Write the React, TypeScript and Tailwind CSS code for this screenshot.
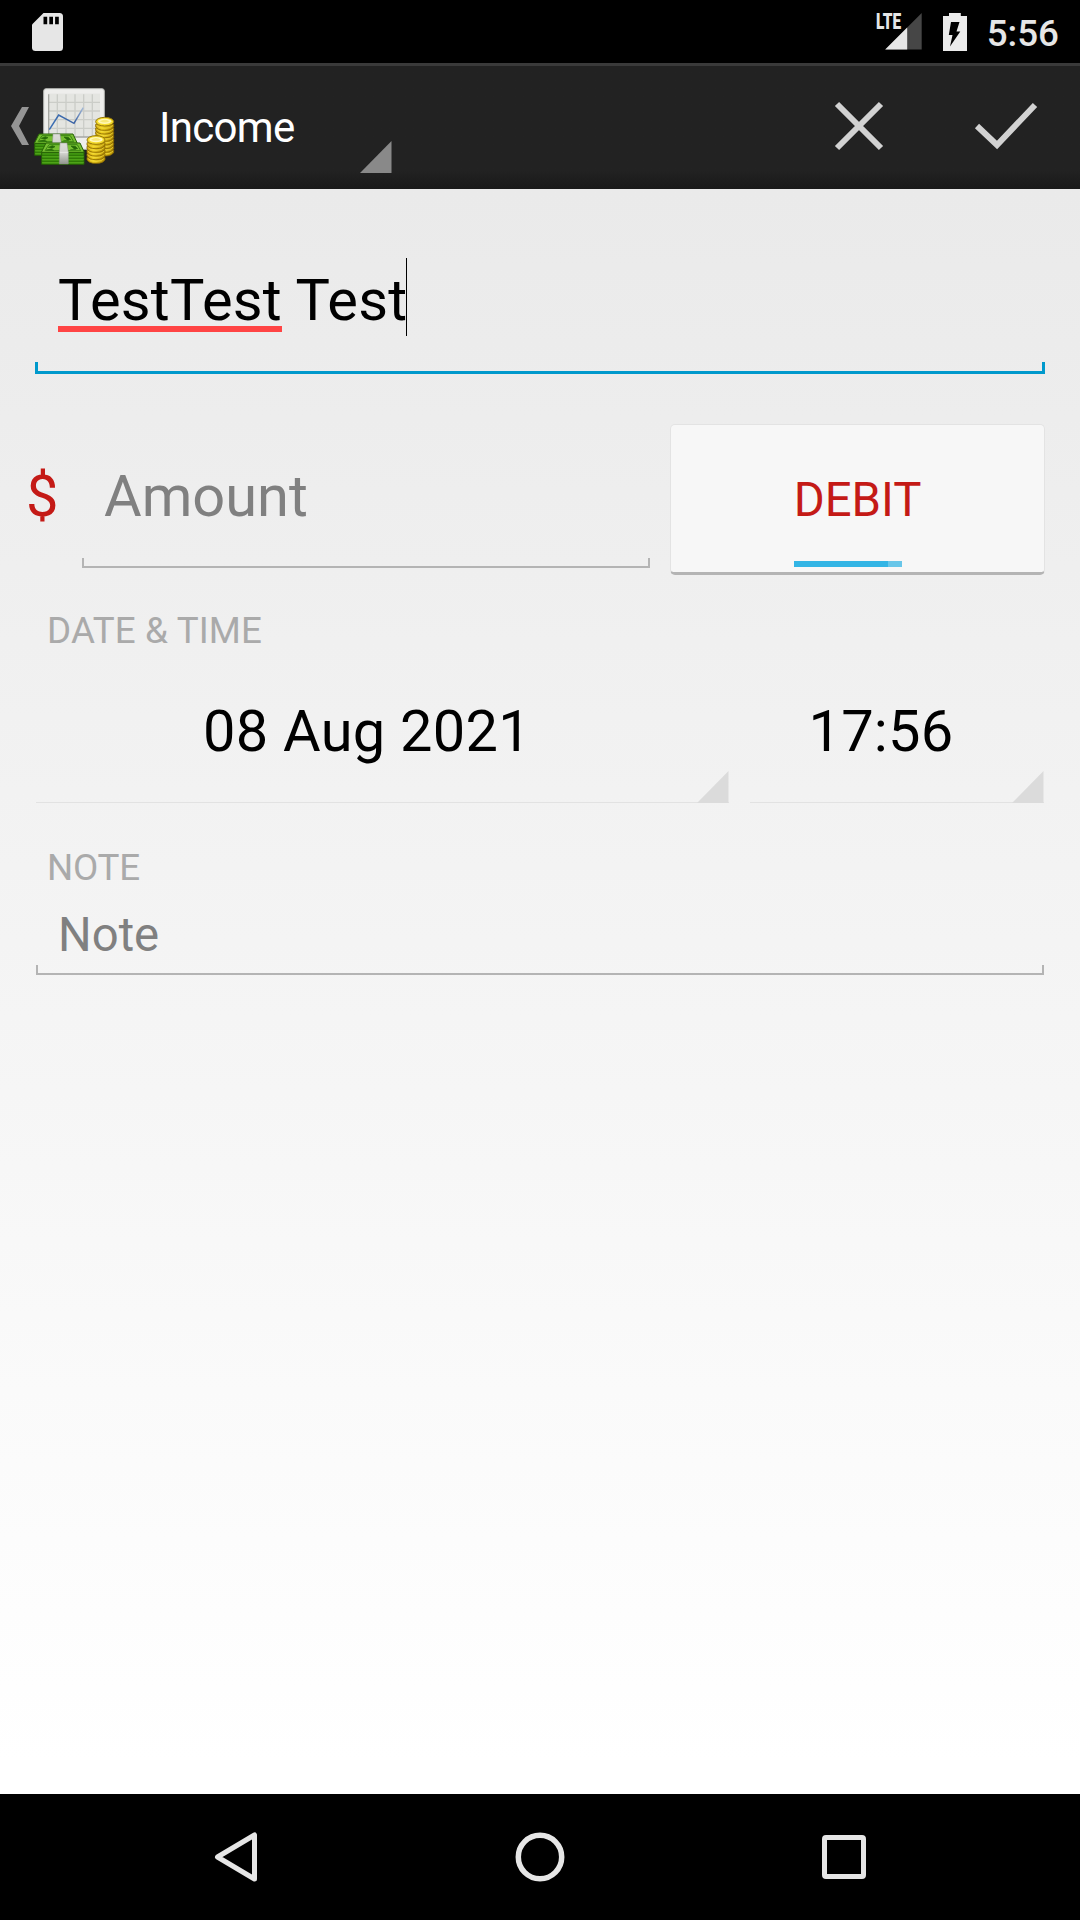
import type { ReactNode } from "react";

function SdCardIcon() {
  return (
    <svg className="ml-8 h-[38px] w-[31px]" viewBox="0 0 31 38">
      <path fill="#e6e6e6" d="M11.5 0H27.500Q31 0 31 3.500V34.500Q31 38 27.500 38H3.500Q0 38 0 34.500V11.500Z" />
      <path fill="#000" d="M11.500 3.700h3.700v7.600h-3.700zM17.300 3.700h3.700v7.600h-3.700zM23.100 3.700h3.700v7.600h-3.700z" />
    </svg>
  );
}

function SignalIcon() {
  return (
    <span className="relative h-[37px] w-[46px]">
      <svg className="h-[37px] w-[46px]" viewBox="0 0 46 37">
        <path fill="#464646" d="M45.700 0V36.500H9.200Z" />
        <path fill="#e6e6e6" d="M31.200 14.500V36.500H9.200Z" />
      </svg>
      <span className="absolute left-0 top-0 origin-left scale-x-[0.7] text-[22px] font-black leading-[18px] text-[#e6e6e6]">
        LTE
      </span>
    </span>
  );
}

function BatteryIcon() {
  return (
    <svg className="ml-[21px] h-[38px] w-6" viewBox="0 0 24 38">
      <path fill="#ebebeb" d="M6 0H17.800V3H24V38H0V3H6Z" />
      <path fill="#000" d="M8 9h8.500l-3 9.500H17.300L7 33.500l2.500-11.500H5.800Z" />
    </svg>
  );
}

function Coins({ x, y, rows }: { x: number; y: number; rows: number }) {
  return (
    <g transform={`translate(${x} ${y})`}>
      {Array.from({ length: rows }, (_, i) => (
        <g key={i} transform={`translate(0 ${(rows - i) * 11})`}>
          <path d="M-27 0V7Q-22 18 0 18T27 7V0Z" fill="url(#coin)" stroke="#8a6a04" strokeWidth="2.500" />
          <path d="M-25 3Q-18 12 0 12T25 3" fill="none" stroke="#f5df45" strokeWidth="2" />
        </g>
      ))}
      <ellipse rx="27" ry="13" cy="3" fill="#f6dc2c" stroke="#96770a" strokeWidth="3" />
      <ellipse rx="20" ry="8" cy="2" fill="#fff7b8" />
      <path d="M-15 2Q0 9 15 2Q0-8-15 2" fill="#f8e878" />
    </g>
  );
}

function Cash({ x, y }: { x: number; y: number }) {
  return (
    <g transform={`translate(${x} ${y})`}>
      <path d="M2 29H129V65H2Z" fill="#3f9410" stroke="#245c06" strokeWidth="3" />
      <path d="M3 38H129M3 47H129M3 56H129" stroke="#2d7506" strokeWidth="3" />
      <path d="M3 42H129M3 51H129M3 60H129" stroke="#62b722" strokeWidth="1.500" />
      <path d="M15 1H117L130 29H1Z" fill="#76bf32" stroke="#266206" strokeWidth="3" />
      <path d="M24 6H109L119 24H12Z" fill="none" stroke="#3b8512" strokeWidth="3" />
      <path d="M22 14l12-5 8 3-9 5zM16 22l14-2 8 3zM90 10l13 1 7 7-10 1zM88 21l17-1" fill="#246807" stroke="#246807" strokeWidth="2" />
      <path d="M57 1H78L82 29V64H55V29Z" fill="url(#band)" stroke="#8b8e88" strokeWidth="1.500" />
      <path d="M56 29H82" stroke="#f4f4f2" strokeWidth="2" />
    </g>
  );
}

function LedgerIcon() {
  return (
    <svg className="ml-[3px] h-[84px] w-[84px]" viewBox="96 252 252 252">
      <defs>
        <linearGradient id="coin">
          <stop offset="0" stopColor="#c49c06" />
          <stop offset=".35" stopColor="#f0d120" />
          <stop offset="1" stopColor="#b08a02" />
        </linearGradient>
        <linearGradient id="band" x2="0" y2="1">
          <stop offset="0" stopColor="#deded9" />
          <stop offset=".5" stopColor="#d0d1cc" />
          <stop offset="1" stopColor="#92968e" />
        </linearGradient>
        <linearGradient id="trend">
          <stop offset="0" stopColor="#3d70b4" />
          <stop offset=".75" stopColor="#3a62a4" />
          <stop offset="1" stopColor="#a9bdd8" />
        </linearGradient>
      </defs>
      <rect x="131" y="266" width="182" height="182" rx="7" fill="#eeeeec" stroke="#b5b6b2" strokeWidth="3" />
      <rect x="144" y="281" width="156" height="130" fill="#e4e5e1" />
      <path
        d="M172 283V411M198 283V411M225 283V411M251 283V411M277 283V411M146 307H300M146 333H300M146 359H300M146 385H300"
        stroke="#cbcdc8"
        strokeWidth="4"
      />
      <path d="M146 283V411H300" fill="none" stroke="#a5a7a2" strokeWidth="4" />
      <path d="M148 389L176 345L222 370L250 323" fill="none" stroke="url(#trend)" strokeWidth="4.500" />
      <Coins x={314} y={362} rows={8} />
      <Cash x={102} y={401} />
      <Coins x={288} y={417} rows={5} />
      <Cash x={123} y={428} />
    </svg>
  );
}

function Corner({ className }: { className: string }) {
  return (
    <svg className={className} viewBox="0 0 32 32">
      <path d="M31.500 0V32H0Z" fill="currentColor" />
    </svg>
  );
}

function PickerField({ className, children }: { className: string; children: ReactNode }) {
  return (
    <div className={className}>
      <span className="text-[57.75px] leading-[68px] tracking-[0.27px]">{children}</span>
      <Corner className="absolute -bottom-px right-0 size-8 text-[#dbdbdb]" />
    </div>
  );
}

function FieldRule({ className }: { className: string }) {
  return <div className={className} />;
}

export default function App() {
  return (
    <div className="flex h-[1920px] w-[1080px] flex-col overflow-hidden bg-black font-[Roboto,sans-serif] text-black">
      <header className="flex h-[63px] shrink-0 items-center text-[#e6e6e6]">
        <SdCardIcon />
        <div className="ml-auto flex h-full items-center pr-[21px]">
          <SignalIcon />
          <BatteryIcon />
          <span className="ml-5 pt-[3px] text-[36.75px] font-medium leading-[43px]">5:56</span>
        </div>
      </header>

      <nav className="flex h-[126px] shrink-0 items-center border-t-[3px] border-[#3a3a3a] bg-linear-to-b from-[#222222] from-85% to-[#191919] pb-[3px]">
        <svg className="ml-[11px] h-[38px] w-[18px]" viewBox="0 0 18 38">
          <path d="M11 0H18L8 19L18 38H11L0 19Z" fill="#959595" />
        </svg>
        <LedgerIcon />
        <div className="relative ml-[11px] flex h-full w-[265px] items-center pl-8 pt-[3px]">
          <span className="text-[42px] leading-[50px] tracking-[-0.7px] text-white">Income</span>
          <Corner className="absolute bottom-[13px] right-0 size-8 text-[#898989]" />
        </div>
        <svg className="ml-auto size-[50px]" viewBox="0 0 50 50" fill="none" stroke="#d2d2d2" strokeWidth="6">
          <path d="M3 3L47 47M47 3L3 47" />
        </svg>
        <svg className="ml-[90px] mr-[42px] h-12 w-[64px]" viewBox="0 0 64 48" fill="none" stroke="#d2d2d2" strokeWidth="6">
          <path d="M3 24L23 43L61 3" />
        </svg>
      </nav>

      <main className="flex h-[1605px] shrink-0 flex-col bg-linear-to-b from-[#eaeaea] to-white to-98% pl-[27px] pr-9">
        <div className="relative -mr-px ml-2 h-[185px] pl-[23px] pt-[77px]">
          <div className="flex items-start">
            <span className="whitespace-pre text-[57.75px] leading-[68px] tracking-[0.25px]">
              <span className="underline decoration-[#ff4444] decoration-[6px] underline-offset-[6px] [text-decoration-skip-ink:none]">TestTest</span>
              {" Test"}
            </span>
            <span className="-ml-px -mt-[8px] h-[78px] w-px bg-black" />
          </div>
          <FieldRule className="absolute bottom-0 left-0 right-0 h-3 border-x-[3px] border-b-[3px] border-[#0099cc]" />
        </div>

        <section className="mt-[50px] flex h-[151px]">
          <span className="-ml-px w-14 shrink-0 pt-[38px] text-[57.75px] leading-[68px] text-[#c41a16]">$</span>
          <div className="relative h-[144px] w-[568px] shrink-0 pl-[22px] pt-[38px]">
            <span className="text-[57.75px] leading-[68px] text-[#808080]">Amount</span>
            <FieldRule className="absolute bottom-0 left-0 right-0 h-[10px] border-x-2 border-b-2 border-[#b4b4b4]" />
          </div>
          <button className="relative ml-5 flex h-[151px] w-[375px] shrink-0 justify-center rounded-[5px] border border-b-[3px] border-[#e3e3e3] border-b-[#b4b4b4] bg-[#f7f7f7] pt-[47px] text-[47.25px] leading-[56px] text-[#c41a16]">
            DEBIT
            <span className="absolute bottom-[5px] left-[123px] h-[6px] w-[108px] border-r-[14px] border-[#68c6e9] bg-[#33b5e5]" />
          </button>
        </section>

        <h2 className="mt-[35px] pl-5 text-[36.75px] leading-[42px] tracking-[0.15px] text-[#aaaaaa]">DATE &amp; TIME</h2>
        <section className="mt-[15px] flex h-[136px] pl-[9px]">
          <PickerField className="relative flex w-[693px] justify-center border-b border-[#e2e2e2] pr-[31px] pt-[30px]">08 Aug 2021</PickerField>
          <PickerField className="relative ml-[21px] flex w-[294px] justify-center border-b border-[#e2e2e2] pr-[32px] pt-[30px]">17:56</PickerField>
        </section>

        <h2 className="mt-[44px] pl-5 text-[36.75px] leading-[42px] tracking-[-0.2px] text-[#aaaaaa]">NOTE</h2>
        <div className="relative ml-[9px] h-[86px] pl-[22px] pt-[18px]">
          <span className="text-[47.25px] leading-[56px] text-[#808080]">Note</span>
          <FieldRule className="absolute bottom-0 left-0 right-0 h-[10px] border-x-2 border-b-2 border-[#b4b4b4]" />
        </div>
      </main>

      <footer className="flex h-[126px] items-center">
        <svg className="ml-[214px] h-[50px] w-[44px]" viewBox="0 0 44 50" fill="none" stroke="#e6e6e6" strokeWidth="5" strokeLinejoin="round">
          <path d="M40.500 3V47L3.500 25Z" />
        </svg>
        <svg className="ml-[257px] size-[50px]" viewBox="0 0 50 50" fill="none" stroke="#e6e6e6" strokeWidth="5.500">
          <circle cx="25" cy="25" r="21.700" />
        </svg>
        <svg className="ml-[257px] size-[44px]" viewBox="0 0 44 44" fill="none" stroke="#e6e6e6" strokeWidth="5">
          <rect x="2.500" y="2.500" width="39" height="39" rx="1.500" />
        </svg>
      </footer>
    </div>
  );
}
